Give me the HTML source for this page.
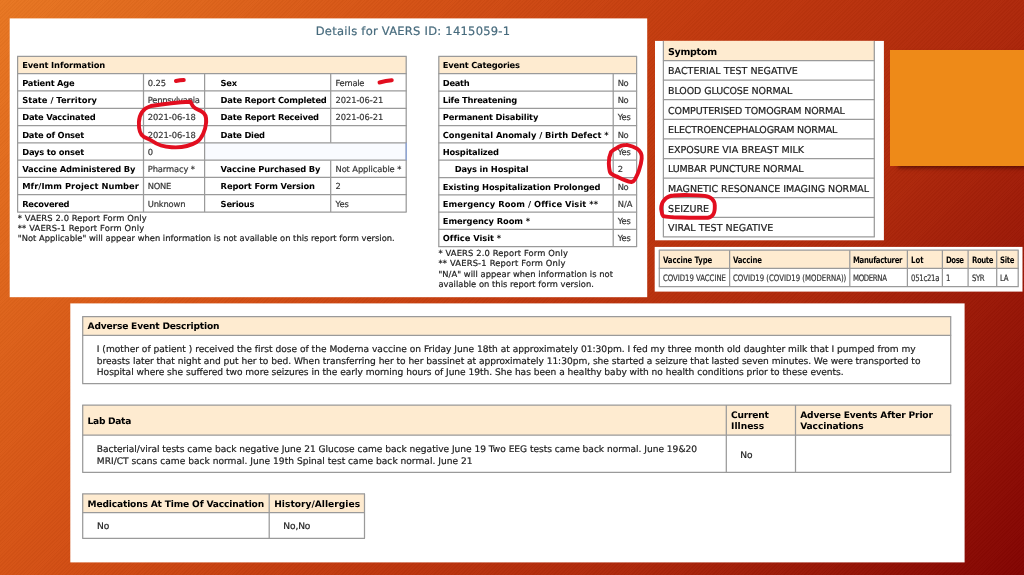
<!DOCTYPE html>
<html lang="en"><head><meta charset="utf-8"><title>Details for VAERS ID: 1415059-1</title>
<style>
html,body{margin:0;padding:0}
body{width:1024px;height:575px;overflow:hidden;position:relative;
 background:
  repeating-linear-gradient(135deg,rgba(0,0,0,.022) 0,rgba(0,0,0,.022) 1px,rgba(255,255,255,.012) 1px,rgba(255,255,255,.012) 2.5px),
  linear-gradient(125deg,#e87722 0%,#d65315 28%,#c23a0e 50%,#ae280b 72%,#830402 100%);
 font-family:'DejaVu Sans','Liberation Sans',sans-serif;color:#000}
#shapes,#marks,#text{position:absolute;left:0;top:0}
#text{width:1024px;height:575px;will-change:transform}
#note{position:absolute;left:889.8px;top:50px;width:135px;height:115.6px;background:#ee8a18;box-shadow:7px 3px 4px -1px rgba(40,0,0,.6)}
.t{position:absolute;white-space:pre;line-height:1;font-size:8.33px;text-rendering:geometricPrecision}
.b{font-weight:700}
.c{font-family:'DejaVu Sans Condensed','DejaVu Sans','Liberation Sans',sans-serif}
.x{transform:scaleX(.87);transform-origin:0 0}
.g{color:#333;-webkit-text-stroke:.18px #333}.d{color:#1c1c1c;-webkit-text-stroke:.2px #1c1c1c}
</style></head><body>
<div id="note"></div>
<svg id="shapes" width="1024" height="575" viewBox="0 0 1024 575">
<rect x="9.70" y="18.40" width="637.50" height="278.80" fill="#fff"/>
<rect x="655.00" y="40.90" width="228.90" height="199.40" fill="#fff"/>
<rect x="654.70" y="246.90" width="367.80" height="44.70" fill="#fff"/>
<rect x="70.30" y="303.40" width="894.30" height="259.00" fill="#fff"/>
<rect x="17.60" y="56.40" width="388.60" height="17.29" fill="#feebd0"/>
<rect x="204.60" y="142.85" width="201.60" height="17.29" fill="#f9fbff"/>
<line x1="17.10" y1="56.40" x2="406.70" y2="56.40" stroke="#9a9a9a" stroke-width="1.25"/>
<line x1="17.10" y1="73.69" x2="406.70" y2="73.69" stroke="#9a9a9a" stroke-width="1.25"/>
<line x1="17.10" y1="90.98" x2="406.70" y2="90.98" stroke="#9a9a9a" stroke-width="1.25"/>
<line x1="17.10" y1="108.27" x2="406.70" y2="108.27" stroke="#9a9a9a" stroke-width="1.25"/>
<line x1="17.10" y1="125.56" x2="406.70" y2="125.56" stroke="#9a9a9a" stroke-width="1.25"/>
<line x1="17.10" y1="142.85" x2="406.70" y2="142.85" stroke="#9a9a9a" stroke-width="1.25"/>
<line x1="17.10" y1="160.14" x2="406.70" y2="160.14" stroke="#9a9a9a" stroke-width="1.25"/>
<line x1="17.10" y1="177.43" x2="406.70" y2="177.43" stroke="#9a9a9a" stroke-width="1.25"/>
<line x1="17.10" y1="194.72" x2="406.70" y2="194.72" stroke="#9a9a9a" stroke-width="1.25"/>
<line x1="17.10" y1="212.01" x2="406.70" y2="212.01" stroke="#9a9a9a" stroke-width="1.25"/>
<line x1="17.60" y1="56.40" x2="17.60" y2="212.01" stroke="#9a9a9a" stroke-width="1.25"/>
<line x1="406.20" y1="56.40" x2="406.20" y2="212.01" stroke="#9a9a9a" stroke-width="1.25"/>
<line x1="143.50" y1="73.69" x2="143.50" y2="212.01" stroke="#9a9a9a" stroke-width="1.25"/>
<line x1="204.60" y1="73.69" x2="204.60" y2="212.01" stroke="#9a9a9a" stroke-width="1.25"/>
<line x1="330.70" y1="73.69" x2="330.70" y2="142.85" stroke="#9a9a9a" stroke-width="1.25"/>
<line x1="330.70" y1="160.14" x2="330.70" y2="212.01" stroke="#9a9a9a" stroke-width="1.25"/>
<line x1="406.20" y1="142.85" x2="406.20" y2="160.14" stroke="#8aa4dc" stroke-width="1.25"/>
<rect x="438.80" y="56.40" width="197.80" height="17.30" fill="#feebd0"/>
<line x1="438.30" y1="56.40" x2="637.10" y2="56.40" stroke="#9a9a9a" stroke-width="1.25"/>
<line x1="438.30" y1="73.70" x2="637.10" y2="73.70" stroke="#9a9a9a" stroke-width="1.25"/>
<line x1="438.30" y1="91.00" x2="637.10" y2="91.00" stroke="#9a9a9a" stroke-width="1.25"/>
<line x1="438.30" y1="108.30" x2="637.10" y2="108.30" stroke="#9a9a9a" stroke-width="1.25"/>
<line x1="438.30" y1="125.60" x2="637.10" y2="125.60" stroke="#9a9a9a" stroke-width="1.25"/>
<line x1="438.30" y1="142.90" x2="637.10" y2="142.90" stroke="#9a9a9a" stroke-width="1.25"/>
<line x1="438.30" y1="160.20" x2="637.10" y2="160.20" stroke="#9a9a9a" stroke-width="1.25"/>
<line x1="438.30" y1="177.50" x2="637.10" y2="177.50" stroke="#9a9a9a" stroke-width="1.25"/>
<line x1="438.30" y1="194.80" x2="637.10" y2="194.80" stroke="#9a9a9a" stroke-width="1.25"/>
<line x1="438.30" y1="212.10" x2="637.10" y2="212.10" stroke="#9a9a9a" stroke-width="1.25"/>
<line x1="438.30" y1="229.40" x2="637.10" y2="229.40" stroke="#9a9a9a" stroke-width="1.25"/>
<line x1="438.30" y1="246.70" x2="637.10" y2="246.70" stroke="#9a9a9a" stroke-width="1.25"/>
<line x1="438.80" y1="56.40" x2="438.80" y2="246.70" stroke="#9a9a9a" stroke-width="1.25"/>
<line x1="636.60" y1="56.40" x2="636.60" y2="246.70" stroke="#9a9a9a" stroke-width="1.25"/>
<line x1="613.20" y1="73.70" x2="613.20" y2="246.70" stroke="#9a9a9a" stroke-width="1.25"/>
<rect x="663.40" y="40.90" width="210.90" height="19.60" fill="#feebd0"/>
<line x1="662.90" y1="60.50" x2="874.80" y2="60.50" stroke="#9a9a9a" stroke-width="1.25"/>
<line x1="662.90" y1="80.10" x2="874.80" y2="80.10" stroke="#9a9a9a" stroke-width="1.25"/>
<line x1="662.90" y1="99.70" x2="874.80" y2="99.70" stroke="#9a9a9a" stroke-width="1.25"/>
<line x1="662.90" y1="119.30" x2="874.80" y2="119.30" stroke="#9a9a9a" stroke-width="1.25"/>
<line x1="662.90" y1="138.90" x2="874.80" y2="138.90" stroke="#9a9a9a" stroke-width="1.25"/>
<line x1="662.90" y1="158.50" x2="874.80" y2="158.50" stroke="#9a9a9a" stroke-width="1.25"/>
<line x1="662.90" y1="178.10" x2="874.80" y2="178.10" stroke="#9a9a9a" stroke-width="1.25"/>
<line x1="662.90" y1="197.70" x2="874.80" y2="197.70" stroke="#9a9a9a" stroke-width="1.25"/>
<line x1="662.90" y1="217.30" x2="874.80" y2="217.30" stroke="#9a9a9a" stroke-width="1.25"/>
<line x1="662.90" y1="236.90" x2="874.80" y2="236.90" stroke="#9a9a9a" stroke-width="1.25"/>
<line x1="663.40" y1="40.90" x2="663.40" y2="236.90" stroke="#9a9a9a" stroke-width="1.25"/>
<line x1="874.30" y1="40.90" x2="874.30" y2="236.90" stroke="#9a9a9a" stroke-width="1.25"/>
<rect x="659.30" y="250.20" width="358.90" height="18.20" fill="#feebd0"/>
<line x1="658.80" y1="250.20" x2="1018.70" y2="250.20" stroke="#9a9a9a" stroke-width="1.25"/>
<line x1="658.80" y1="268.40" x2="1018.70" y2="268.40" stroke="#9a9a9a" stroke-width="1.25"/>
<line x1="658.80" y1="286.60" x2="1018.70" y2="286.60" stroke="#9a9a9a" stroke-width="1.25"/>
<line x1="659.30" y1="250.20" x2="659.30" y2="286.60" stroke="#9a9a9a" stroke-width="1.25"/>
<line x1="729.60" y1="250.20" x2="729.60" y2="286.60" stroke="#9a9a9a" stroke-width="1.25"/>
<line x1="849.80" y1="250.20" x2="849.80" y2="286.60" stroke="#9a9a9a" stroke-width="1.25"/>
<line x1="907.40" y1="250.20" x2="907.40" y2="286.60" stroke="#9a9a9a" stroke-width="1.25"/>
<line x1="942.40" y1="250.20" x2="942.40" y2="286.60" stroke="#9a9a9a" stroke-width="1.25"/>
<line x1="968.10" y1="250.20" x2="968.10" y2="286.60" stroke="#9a9a9a" stroke-width="1.25"/>
<line x1="996.70" y1="250.20" x2="996.70" y2="286.60" stroke="#9a9a9a" stroke-width="1.25"/>
<line x1="1018.20" y1="250.20" x2="1018.20" y2="286.60" stroke="#9a9a9a" stroke-width="1.25"/>
<rect x="82.70" y="316.60" width="868.00" height="18.80" fill="#feebd0"/>
<line x1="82.20" y1="316.60" x2="951.20" y2="316.60" stroke="#9a9a9a" stroke-width="1.25"/>
<line x1="82.20" y1="335.40" x2="951.20" y2="335.40" stroke="#9a9a9a" stroke-width="1.25"/>
<line x1="82.20" y1="383.60" x2="951.20" y2="383.60" stroke="#9a9a9a" stroke-width="1.25"/>
<line x1="82.70" y1="316.60" x2="82.70" y2="383.60" stroke="#9a9a9a" stroke-width="1.25"/>
<line x1="950.70" y1="316.60" x2="950.70" y2="383.60" stroke="#9a9a9a" stroke-width="1.25"/>
<rect x="82.70" y="405.00" width="868.00" height="30.20" fill="#feebd0"/>
<line x1="82.20" y1="405.00" x2="951.20" y2="405.00" stroke="#9a9a9a" stroke-width="1.25"/>
<line x1="82.20" y1="435.20" x2="951.20" y2="435.20" stroke="#9a9a9a" stroke-width="1.25"/>
<line x1="82.20" y1="472.30" x2="951.20" y2="472.30" stroke="#9a9a9a" stroke-width="1.25"/>
<line x1="82.70" y1="405.00" x2="82.70" y2="472.30" stroke="#9a9a9a" stroke-width="1.25"/>
<line x1="726.30" y1="405.00" x2="726.30" y2="472.30" stroke="#9a9a9a" stroke-width="1.25"/>
<line x1="795.50" y1="405.00" x2="795.50" y2="472.30" stroke="#9a9a9a" stroke-width="1.25"/>
<line x1="950.70" y1="405.00" x2="950.70" y2="472.30" stroke="#9a9a9a" stroke-width="1.25"/>
<rect x="82.70" y="493.80" width="281.80" height="18.90" fill="#feebd0"/>
<line x1="82.20" y1="493.80" x2="365.00" y2="493.80" stroke="#9a9a9a" stroke-width="1.25"/>
<line x1="82.20" y1="512.70" x2="365.00" y2="512.70" stroke="#9a9a9a" stroke-width="1.25"/>
<line x1="82.20" y1="538.30" x2="365.00" y2="538.30" stroke="#9a9a9a" stroke-width="1.25"/>
<line x1="82.70" y1="493.80" x2="82.70" y2="538.30" stroke="#9a9a9a" stroke-width="1.25"/>
<line x1="269.20" y1="493.80" x2="269.20" y2="538.30" stroke="#9a9a9a" stroke-width="1.25"/>
<line x1="364.50" y1="493.80" x2="364.50" y2="538.30" stroke="#9a9a9a" stroke-width="1.25"/>
</svg>
<div id="text">
<div class="t" style="left:315.75px;top:26px;font-size:11.5px;color:#476b7d;-webkit-text-stroke:.2px #476b7d;letter-spacing:0.256px">Details for VAERS ID: 1415059-1</div>
<div class="t b" style="left:22.20px;top:61px;letter-spacing:-0.108px">Event Information</div>
<div class="t b" style="left:22.20px;top:79px;letter-spacing:-0.233px">Patient Age</div>
<div class="t g" style="left:147.80px;top:79px;letter-spacing:-0.087px">0.25</div>
<div class="t b" style="left:220.60px;top:79px;letter-spacing:-0.260px">Sex</div>
<div class="t g" style="left:335.50px;top:79px;letter-spacing:-0.229px">Female</div>
<div class="t b" style="left:22.20px;top:96px;letter-spacing:0.011px">State / Territory</div>
<div class="t g" style="left:147.80px;top:96px;letter-spacing:-0.243px">Pennsylvania</div>
<div class="t b" style="left:220.60px;top:96px;letter-spacing:-0.208px">Date Report Completed</div>
<div class="t g" style="left:335.50px;top:96px;letter-spacing:-0.066px">2021-06-21</div>
<div class="t b" style="left:22.20px;top:113px;letter-spacing:-0.223px">Date Vaccinated</div>
<div class="t g" style="left:147.80px;top:113px;letter-spacing:-0.051px">2021-06-18</div>
<div class="t b" style="left:220.60px;top:113px;letter-spacing:-0.205px">Date Report Received</div>
<div class="t g" style="left:335.50px;top:113px;letter-spacing:-0.066px">2021-06-21</div>
<div class="t b" style="left:22.20px;top:131px;letter-spacing:-0.243px">Date of Onset</div>
<div class="t g" style="left:147.80px;top:131px;letter-spacing:-0.051px">2021-06-18</div>
<div class="t b" style="left:220.60px;top:131px;letter-spacing:-0.245px">Date Died</div>
<div class="t b" style="left:22.20px;top:148px;letter-spacing:-0.204px">Days to onset</div>
<div class="t g" style="left:147.80px;top:148px">0</div>
<div class="t b" style="left:22.20px;top:165px;letter-spacing:-0.154px">Vaccine Administered By</div>
<div class="t g" style="left:147.80px;top:165px;letter-spacing:-0.122px">Pharmacy *</div>
<div class="t b" style="left:220.60px;top:165px;letter-spacing:-0.147px">Vaccine Purchased By</div>
<div class="t g" style="left:335.50px;top:165px;letter-spacing:-0.101px">Not Applicable *</div>
<div class="t b" style="left:22.20px;top:182px;letter-spacing:0.036px">Mfr/Imm Project Number</div>
<div class="t g" style="left:147.80px;top:182px;letter-spacing:-0.258px">NONE</div>
<div class="t b" style="left:220.60px;top:182px;letter-spacing:-0.129px">Report Form Version</div>
<div class="t g" style="left:335.50px;top:182px">2</div>
<div class="t b" style="left:22.20px;top:200px;letter-spacing:-0.280px">Recovered</div>
<div class="t g" style="left:147.80px;top:200px;letter-spacing:-0.167px">Unknown</div>
<div class="t b" style="left:220.60px;top:200px;letter-spacing:-0.210px">Serious</div>
<div class="t g" style="left:335.50px;top:200px;letter-spacing:-0.068px">Yes</div>
<div class="t d" style="left:17.80px;top:214px;letter-spacing:0.124px">* VAERS 2.0 Report Form Only</div>
<div class="t d" style="left:17.80px;top:224px;letter-spacing:0.163px">** VAERS-1 Report Form Only</div>
<div class="t d" style="left:17.80px;top:234px;letter-spacing:0.021px">"Not Applicable" will appear when information is not available on this report form version.</div>
<div class="t b" style="left:442.80px;top:61px;letter-spacing:-0.199px">Event Categories</div>
<div class="t b" style="left:442.80px;top:79px;letter-spacing:-0.319px">Death</div>
<div class="t g" style="left:617.70px;top:79px;letter-spacing:-0.364px">No</div>
<div class="t b" style="left:442.80px;top:96px;letter-spacing:-0.214px">Life Threatening</div>
<div class="t g" style="left:617.70px;top:96px;letter-spacing:-0.364px">No</div>
<div class="t b" style="left:442.80px;top:113px;letter-spacing:-0.174px">Permanent Disability</div>
<div class="t g" style="left:617.70px;top:113px;letter-spacing:-0.101px">Yes</div>
<div class="t b" style="left:442.80px;top:131px;letter-spacing:-0.039px">Congenital Anomaly / Birth Defect *</div>
<div class="t g" style="left:617.70px;top:131px;letter-spacing:-0.364px">No</div>
<div class="t b" style="left:442.80px;top:148px;letter-spacing:-0.195px">Hospitalized</div>
<div class="t g" style="left:617.70px;top:148px;letter-spacing:-0.101px">Yes</div>
<div class="t b" style="left:454.80px;top:165px;letter-spacing:-0.154px">Days in Hospital</div>
<div class="t g" style="left:617.70px;top:165px">2</div>
<div class="t b" style="left:442.80px;top:183px;letter-spacing:-0.134px">Existing Hospitalization Prolonged</div>
<div class="t g" style="left:617.70px;top:183px;letter-spacing:-0.364px">No</div>
<div class="t b" style="left:442.80px;top:200px;letter-spacing:0.056px">Emergency Room / Office Visit **</div>
<div class="t g" style="left:617.70px;top:200px;letter-spacing:0.022px">N/A</div>
<div class="t b" style="left:442.80px;top:217px;letter-spacing:-0.101px">Emergency Room *</div>
<div class="t g" style="left:617.70px;top:217px;letter-spacing:-0.101px">Yes</div>
<div class="t b" style="left:442.80px;top:234px;letter-spacing:-0.040px">Office Visit *</div>
<div class="t g" style="left:617.70px;top:234px;letter-spacing:-0.101px">Yes</div>
<div class="t d" style="left:438.40px;top:249px;letter-spacing:0.146px">* VAERS 2.0 Report Form Only</div>
<div class="t d" style="left:438.40px;top:259px;letter-spacing:0.193px">** VAERS-1 Report Form Only</div>
<div class="t d" style="left:438.40px;top:270px;letter-spacing:0.061px">"N/A" will appear when information is not</div>
<div class="t d" style="left:438.40px;top:280px;letter-spacing:0.029px">available on this report form version.</div>
<div class="t b" style="left:667.90px;top:48px;font-size:9.5px;letter-spacing:-0.258px">Symptom</div>
<div class="t d" style="left:668.10px;top:67px;font-size:9.5px;letter-spacing:0.009px">BACTERIAL TEST NEGATIVE</div>
<div class="t d" style="left:668.10px;top:87px;font-size:9.5px;letter-spacing:-0.112px">BLOOD GLUCOSE NORMAL</div>
<div class="t d" style="left:668.10px;top:107px;font-size:9.5px;letter-spacing:-0.121px">COMPUTERISED TOMOGRAM NORMAL</div>
<div class="t d" style="left:668.10px;top:126px;font-size:9.5px;letter-spacing:-0.175px">ELECTROENCEPHALOGRAM NORMAL</div>
<div class="t d" style="left:668.10px;top:146px;font-size:9.5px;letter-spacing:-0.006px">EXPOSURE VIA BREAST MILK</div>
<div class="t d" style="left:668.10px;top:165px;font-size:9.5px;letter-spacing:-0.150px">LUMBAR PUNCTURE NORMAL</div>
<div class="t d" style="left:668.10px;top:185px;font-size:9.5px;letter-spacing:-0.027px">MAGNETIC RESONANCE IMAGING NORMAL</div>
<div class="t d" style="left:668.10px;top:205px;font-size:9.5px;letter-spacing:0.013px">SEIZURE</div>
<div class="t d" style="left:668.10px;top:224px;font-size:9.5px;letter-spacing:0.046px">VIRAL TEST NEGATIVE</div>
<div class="t b c x" style="left:662.90px;top:257px;font-size:8.9px;letter-spacing:-0.112px">Vaccine Type</div>
<div class="t c g x" style="left:662.90px;top:275px;font-size:8.9px;letter-spacing:-0.053px">COVID19 VACCINE</div>
<div class="t b c x" style="left:733.20px;top:257px;font-size:8.9px;letter-spacing:-0.167px">Vaccine</div>
<div class="t c g x" style="left:733.20px;top:275px;font-size:8.9px;letter-spacing:-0.011px">COVID19 (COVID19 (MODERNA))</div>
<div class="t b c x" style="left:853.40px;top:257px;font-size:8.9px;letter-spacing:-0.379px">Manufacturer</div>
<div class="t c g x" style="left:853.40px;top:275px;font-size:8.9px;letter-spacing:-0.391px">MODERNA</div>
<div class="t b c x" style="left:911.00px;top:257px;font-size:8.9px">Lot</div>
<div class="t c g x" style="left:911.00px;top:275px;font-size:8.9px;letter-spacing:-0.325px">051c21a</div>
<div class="t b c x" style="left:946.00px;top:257px;font-size:8.9px;letter-spacing:-0.517px">Dose</div>
<div class="t c g x" style="left:946.00px;top:275px;font-size:8.9px">1</div>
<div class="t b c x" style="left:971.70px;top:257px;font-size:8.9px;letter-spacing:-0.485px">Route</div>
<div class="t c g x" style="left:971.70px;top:275px;font-size:8.9px;letter-spacing:-0.569px">SYR</div>
<div class="t b c x" style="left:1000.30px;top:257px;font-size:8.9px;letter-spacing:-0.411px">Site</div>
<div class="t c g x" style="left:1000.30px;top:275px;font-size:8.9px;letter-spacing:-0.407px">LA</div>
<div class="t b" style="left:87.60px;top:323px;font-size:9.1px;letter-spacing:-0.168px">Adverse Event Description</div>
<div class="t d" style="left:96.80px;top:346px;font-size:9.1px;letter-spacing:-0.004px">I (mother of patient ) received the first dose of the Moderna vaccine on Friday June 18th at approximately 01:30pm. I fed my three month old daughter milk that I pumped from my</div>
<div class="t d" style="left:96.80px;top:358px;font-size:9.1px;letter-spacing:-0.039px">breasts later that night and put her to bed. When transferring her to her bassinet at approximately 11:30pm, she started a seizure that lasted seven minutes. We were transported to</div>
<div class="t d" style="left:96.80px;top:369px;font-size:9.1px;letter-spacing:-0.033px">Hospital where she suffered two more seizures in the early morning hours of June 19th. She has been a healthy baby with no health conditions prior to these events.</div>
<div class="t b" style="left:87.60px;top:418px;font-size:9.1px;letter-spacing:-0.298px">Lab Data</div>
<div class="t b" style="left:731.10px;top:412px;font-size:9.1px;letter-spacing:-0.244px">Current</div>
<div class="t b" style="left:731.10px;top:423px;font-size:9.1px">Illness</div>
<div class="t b" style="left:800.20px;top:412px;font-size:9.1px;letter-spacing:-0.160px">Adverse Events After Prior</div>
<div class="t b" style="left:800.20px;top:423px;font-size:9.1px;letter-spacing:-0.125px">Vaccinations</div>
<div class="t d" style="left:96.80px;top:446px;font-size:9.1px;letter-spacing:-0.032px">Bacterial/viral tests came back negative June 21 Glucose came back negative June 19 Two EEG tests came back normal. June 19&amp;20</div>
<div class="t d" style="left:96.80px;top:458px;font-size:9.1px;letter-spacing:0.003px">MRI/CT scans came back normal. June 19th Spinal test came back normal. June 21</div>
<div class="t d" style="left:740.30px;top:452px;font-size:9.1px">No</div>
<div class="t b" style="left:87.60px;top:501px;font-size:9.1px;letter-spacing:-0.166px">Medications At Time Of Vaccination</div>
<div class="t b" style="left:274.20px;top:501px;font-size:9.1px;letter-spacing:0.017px">History/Allergies</div>
<div class="t d" style="left:97.00px;top:523px;font-size:9.1px">No</div>
<div class="t d" style="left:283.30px;top:523px;font-size:9.1px;letter-spacing:-0.125px">No,No</div>
</div>
<svg id="marks" width="1024" height="575" viewBox="0 0 1024 575" fill="none" stroke="#e20e1f" stroke-width="3.9" stroke-linecap="round" stroke-linejoin="round">
<path d="M175.9 81 Q180 80.2 183.8 80"/>
<path d="M379.5 82.5 Q386 80.9 391.8 80.3"/>
<path d="M190.5 101.8 C178 102.3 160 104.5 150.9 106 C143 108.5 139.3 115 138.9 122.1 C138.6 130 141 135 143.6 136.7 C147 138.5 150 139.5 153 141.5 C157 144.5 163 146.8 171.7 147.2 C180 147.8 190 146 196.8 142 C202 138.5 205.5 130 206.2 122.1 C206.5 116 204.5 113 202 111.7 C198 109.5 195 108.5 193.7 107 C192 105 191.5 103.5 190.5 101.8"/>
<path d="M626.7 144.9 C622 145 619 146.5 617.3 147.7 C613.5 149.5 611.8 151 611.1 151.9 C609.3 156 608.6 159 608.8 163.2 C609 167.5 609.3 170.5 610.2 172.6 C611.5 174.8 613.5 175.5 616.3 176.4 C619.5 177.8 622 179 624.8 180.1 C627.5 181.3 629.5 182 631.4 182 C633.3 181.6 634.3 180.5 635.1 179.2 C636.8 176 638 173.5 638.9 170.7 C640.3 166.5 641.4 162.5 641.7 158.5 C641.9 156 641.6 154.5 640.8 152.9 C639.8 151 638.5 149.6 637 148.6 C634.5 147 632.5 146 626.7 144.9"/>
<path d="M666 198.3 C668 196.5 671 195.6 673.4 195.5 C679 195 684 195 689 195.1 C695 195.2 700 195.4 704.7 195.9 C708 196.5 710.3 197.3 711.7 198.6 C713.8 200.5 714.8 203 714.8 205.6 C714.9 209.5 714.5 212.3 713.3 214.2 C712 216.3 710.3 217.4 707.8 217.7 C701 218 695 217.7 689 217.7 C683 217.7 678 217.5 673.4 217.3 C669 217 665.5 216.9 663.3 216.2 C662 214.8 661.8 213.5 661.7 211.9 C661 209.5 661 208 661.3 206.4 C661.8 203.5 663.3 200.5 666 198.3"/>
</svg>
</body></html>
